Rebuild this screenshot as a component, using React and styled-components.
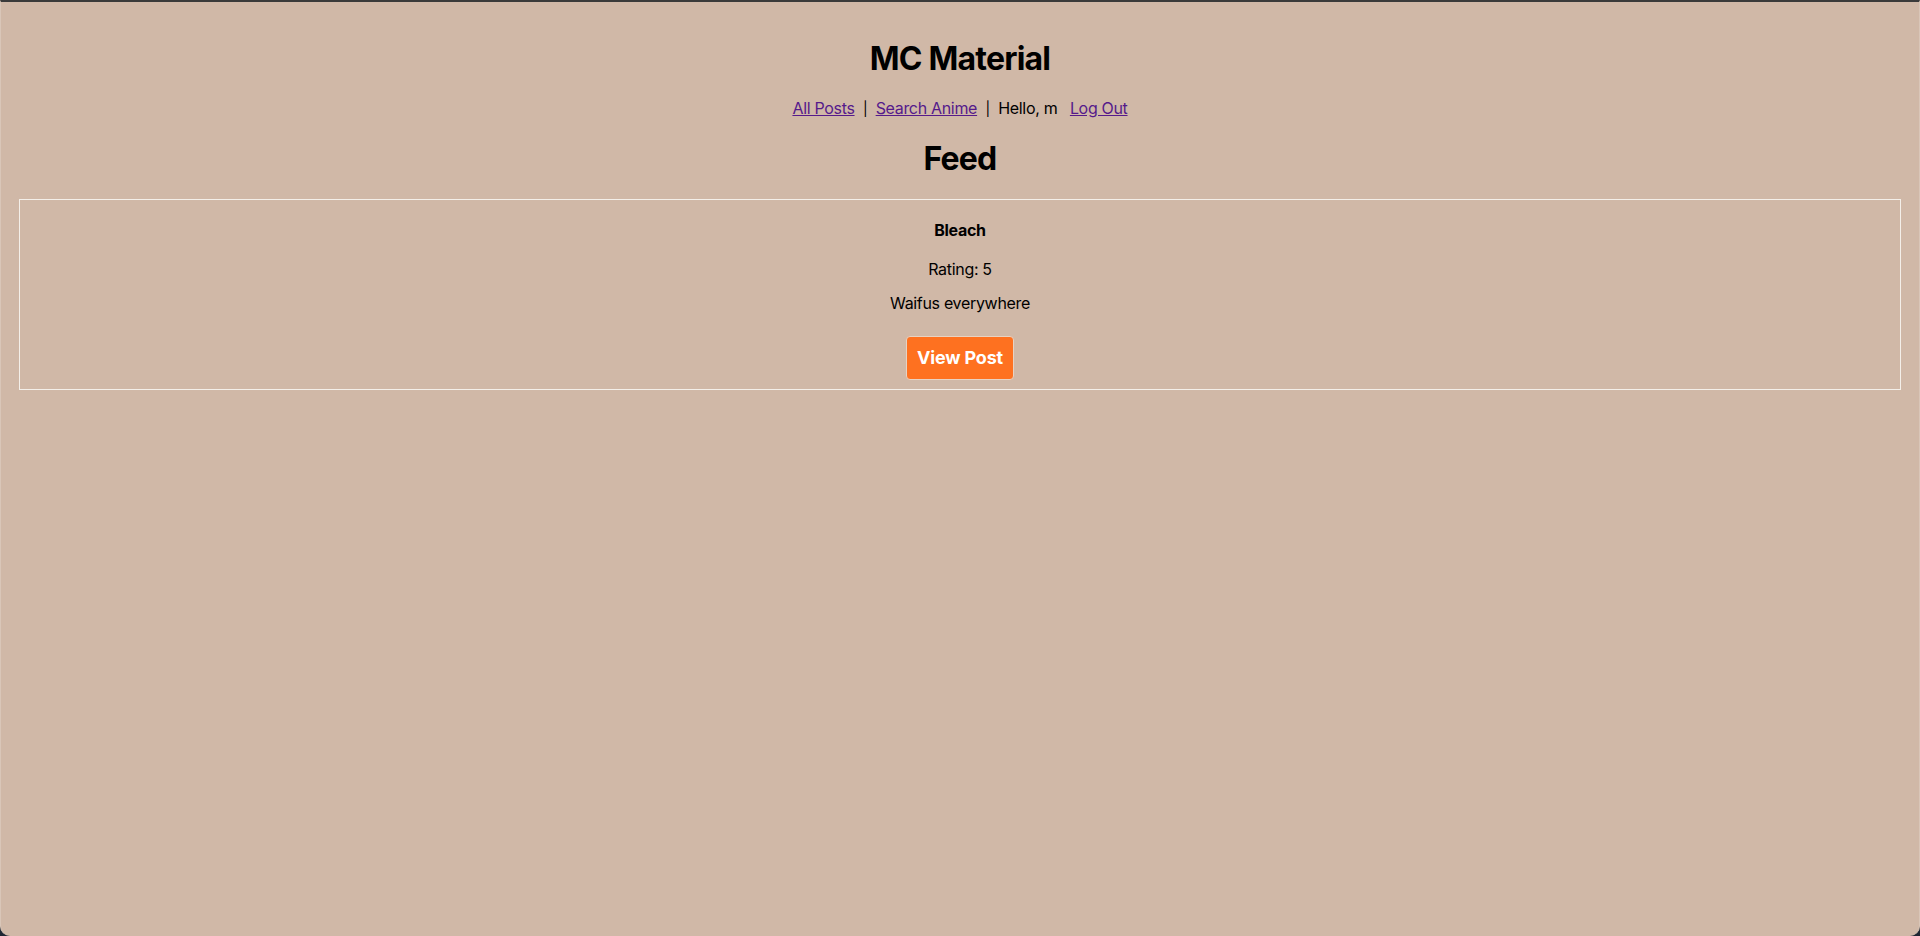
import React from 'react'
import styled, { createGlobalStyle } from 'styled-components'

const GlobalStyle = createGlobalStyle`
  html, body {
    margin: 0;
    padding: 0;
    background: #1f2733;
  }
  body {
    font-family: Inter, "Noto Sans", sans-serif;
    color: #000;
    letter-spacing: -0.02em;
  }
`

const Window = styled.div`
  min-height: 936px;
  box-sizing: border-box;
  background-color: #d0b8a7;
  border-top: 2px solid #3a3a3a;
  border-left: 1px solid #d9c6b8;
  border-right: 1px solid #d9c6b8;
  border-radius: 0 0 10px 10px;
  padding: 16px 18px;
  text-align: center;
`

const Title = styled.h1`
  font-size: 32px;
  font-weight: 700;
  letter-spacing: -0.025em;
  margin: 21.44px 0;
`

const Nav = styled.p`
  font-size: 16px;
  line-height: 1.1;
  margin: 16px 0;
  white-space: pre;
`

const NavLink = styled.a`
  color: #551a8b;
  text-decoration: underline;
  cursor: pointer;
`

const Sep = styled.span`
  font-size: 14px;
`

const Feed = styled.div`
  border: 1px solid #f4efe9;
  margin-top: 16px;
`

const PostTitle = styled.h4`
  font-size: 16px;
  font-weight: 700;
  line-height: 1.1;
  margin: 22px 0 21px;
`

const PostText = styled.p`
  font-size: 16px;
  line-height: 1.1;
  margin: 16px 0;
`

const ViewBtn = styled.button`
  font-family: Inter, "Noto Sans", sans-serif;
  font-size: 18px;
  font-weight: 700;
  letter-spacing: -0.01em;
  line-height: 1.2;
  color: white;
  background-color: #fe7120;
  border: 1px solid #e8d2c2;
  border-radius: 4px;
  padding: 10px 10px;
  margin: 8px 0 9px;
  cursor: pointer;
`

const posts = [
  { id: 1, anime: 'Bleach', rating: 5, body: 'Waifus everywhere' },
]

const App = () => {
  return (
    <>
      <GlobalStyle />
      <Window>
        <Title>MC Material</Title>
        <Nav>
          <NavLink>All Posts</NavLink>{'  '}<Sep>|</Sep>{'  '}
          <NavLink>Search Anime</NavLink>{'  '}<Sep>|</Sep>{'  '}
          Hello, m{'   '}
          <NavLink>Log Out</NavLink>
        </Nav>
        <Title>Feed</Title>
        {posts.map(p => (
          <Feed key={p.id}>
            <PostTitle>{p.anime}</PostTitle>
            <PostText>Rating: {p.rating}</PostText>
            <PostText>{p.body}</PostText>
            <ViewBtn>View Post</ViewBtn>
          </Feed>
        ))}
      </Window>
    </>
  )
}

export default App
